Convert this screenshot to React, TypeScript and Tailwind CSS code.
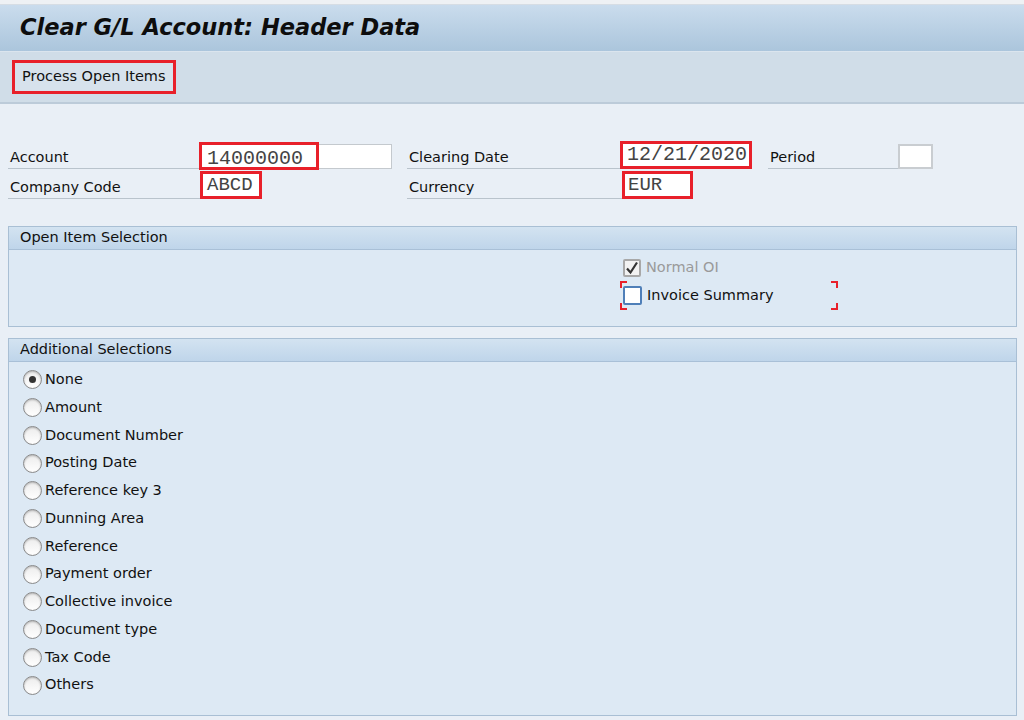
import React from 'react';

const radios = [
  'None',
  'Amount',
  'Document Number',
  'Posting Date',
  'Reference key 3',
  'Dunning Area',
  'Reference',
  'Payment order',
  'Collective invoice',
  'Document type',
  'Tax Code',
  'Others',
];

const Radio: React.FC<{ checked?: boolean }> = ({ checked }) => (
  <span className="w-[19px] h-[19px] rounded-full border border-[#8a8a8a] bg-gradient-to-b from-[#ececec] to-white flex items-center justify-center shadow-[inset_0_1px_2px_rgba(0,0,0,0.25)]">
    {checked && <span className="w-[7px] h-[7px] rounded-full bg-[#333]" />}
  </span>
);

const GroupHeader: React.FC<{ title: string }> = ({ title }) => (
  <div className="h-[23px] bg-gradient-to-b from-[#d3e3f1] to-[#bfd5ea] border-b border-[#a9c0d7] pl-[11px] flex items-center text-[14.5px] text-[#111]">
    {title}
  </div>
);

const Label: React.FC<{ text: string; w: string }> = ({ text, w }) => (
  <div className={`${w} h-full border-b border-[#b9c3cc] flex items-end pb-[2px] pl-[2px] text-[14.5px] leading-[18px] text-[#111]`}>
    {text}
  </div>
);

export default function App() {
  return (
    <div className="w-[1024px] h-[720px] overflow-hidden bg-[#e9eff6] font-['DejaVu_Sans',sans-serif]">
      <div className="h-[5px] bg-[#eef1f4] border-b border-[#d6dde4]" />
      <div className="h-[47px] bg-gradient-to-b from-[#cadced] to-[#abc5dc] border-b border-[#dbe5ee] flex items-center pl-[20px]">
        <h1 className="text-[22.5px] font-bold italic text-[#0d0d0d]">Clear G/L Account: Header Data</h1>
      </div>
      <div className="h-[52px] bg-[#d0dde8] border-b-2 border-[#bccbd9] flex items-center pl-[12px]">
        <div className="h-[34px] px-[7px] border-[3px] border-[#e8202a] bg-[#d7e2ec] flex items-center text-[14.5px] text-[#111]">
          Process Open Items
        </div>
      </div>

      <div className="pt-[37px] pl-[8px]">
        <div className="flex h-[28px] items-stretch">
          <div className="w-[399px] flex items-stretch">
            <Label text="Account" w="w-[192px]" />
            <div className="relative w-[192px] h-[25px] mt-[3px] bg-white border border-[#c4c9ce]">
              <div className="absolute left-[-2px] top-[-3px] w-[120px] h-[28px] border-[3px] border-[#e8202a]" />
              <span className="absolute left-[6px] top-[-1px] font-['Liberation_Mono',monospace] text-[20px] text-[#444]">14000000</span>
            </div>
          </div>
          <div className="w-[361px] flex items-stretch">
            <Label text="Clearing Date" w="w-[213px]" />
            <div className="w-[132px] h-[28px] border-[3px] border-[#e8202a] bg-white flex items-center pl-[4px] font-['Liberation_Mono',monospace] text-[20px] text-[#444]">
              12/21/2020
            </div>
          </div>
          <div className="flex items-stretch">
            <Label text="Period" w="w-[130px]" />
            <div className="w-[35px] h-[25px] mt-[3px] bg-white border-2 border-[#c9cdd1]" />
          </div>
        </div>

        <div className="flex h-[28px] items-stretch mt-[2px]">
          <div className="w-[399px] flex items-stretch">
            <Label text="Company Code" w="w-[192px]" />
            <div className="w-[62px] h-[28px] border-[3px] border-[#e8202a] bg-white flex items-center pl-[4px] font-['Liberation_Mono',monospace] text-[19px] text-[#444]">
              ABCD
            </div>
          </div>
          <div className="w-[361px] flex items-stretch">
            <Label text="Currency" w="w-[215px]" />
            <div className="w-[71px] h-[28px] border-[3px] border-[#e8202a] bg-white flex items-center pl-[3px] font-['Liberation_Mono',monospace] text-[19px] text-[#444]">
              EUR
            </div>
          </div>
        </div>
      </div>

      <div className="mx-[8px] w-[1009px] mt-[27px] border border-[#a9bfd4] bg-[#dde9f4]">
        <GroupHeader title="Open Item Selection" />
        <div className="h-[76px] pl-[614px] pt-[8px] flex flex-col">
          <div className="h-[19px] flex items-center gap-[5px] text-[14.5px] text-[#9a9a9a]">
            <span className="w-[18px] h-[18px] rounded-[2px] border-2 border-[#a8a8a8] bg-[#f2f2f2] flex items-center justify-center">
              <svg width="14" height="14" viewBox="0 0 14 14">
                <path d="M2 7.5 L5.5 11.5 L12 1.5" fill="none" stroke="#333" strokeWidth="2.2" />
              </svg>
            </span>
            Normal OI
          </div>
          <div className="relative mt-[9px] h-[19px] flex items-center gap-[5px] text-[14.5px] text-[#111]">
            <span className="w-[19px] h-[19px] rounded-[2px] border-2 border-[#4f7fb8] bg-white" />
            Invoice Summary
            <span className="absolute left-[-3px] top-[-5px] w-[7px] h-[7px] border-l-2 border-t-2 border-[#e8202a]" />
            <span className="absolute left-[-3px] bottom-[-5px] w-[7px] h-[7px] border-l-2 border-b-2 border-[#e8202a]" />
            <span className="absolute left-[208px] top-[-5px] w-[7px] h-[7px] border-r-2 border-t-2 border-[#e8202a]" />
            <span className="absolute left-[208px] bottom-[-5px] w-[7px] h-[7px] border-r-2 border-b-2 border-[#e8202a]" />
          </div>
        </div>
      </div>

      <div className="mx-[8px] w-[1009px] mt-[11px] border border-[#a9bfd4] bg-[#dde9f4]">
        <GroupHeader title="Additional Selections" />
        <div className="h-[353px] pl-[14px] pt-[4px] flex flex-col">
          {radios.map((r, i) => (
            <div key={r} className="h-[27.75px] flex items-center gap-[3px] text-[14.5px] text-[#111]">
              <Radio checked={i === 0} />
              {r}
            </div>
          ))}
        </div>
      </div>
    </div>
  );
}
